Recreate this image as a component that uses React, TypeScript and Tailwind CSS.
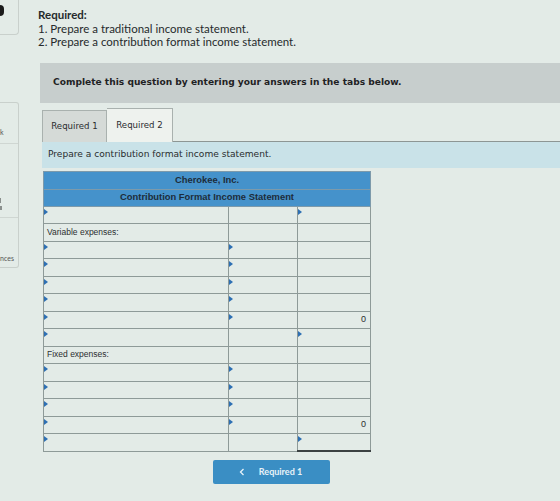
import React from 'react';

type Row = {
  label?: string;
  marks?: [boolean, boolean, boolean];
  value?: string;
  subtotal?: boolean;
  last?: boolean;
};

const rows: Row[] = [
  { marks: [true, false, true] },
  { label: 'Variable expenses:' },
  { marks: [true, true, false] },
  { marks: [true, true, false] },
  { marks: [true, true, false] },
  { marks: [true, true, false] },
  { marks: [true, true, false], value: '0' },
  { marks: [true, false, true], subtotal: true },
  { label: 'Fixed expenses:' },
  { marks: [true, true, false] },
  { marks: [true, true, false] },
  { marks: [true, true, false] },
  { marks: [true, true, false], value: '0' },
  { marks: [true, false, true], subtotal: true, last: true },
];

const Mark = () => (
  <span className="absolute left-0 top-[2px] h-0 w-0 border-y-[3px] border-l-[4px] border-y-transparent border-l-[#2d6fb3]" />
);

const App: React.FC = () => {
  return (
    <div className="flex h-[501px] w-[560px] overflow-hidden bg-[#e3ebe7] text-[#2a2d2e]">
      {/* sidebar of the page behind */}
      <div className="flex w-[19px] shrink-0 flex-col">
        <div className="flex h-[35px] items-start rounded-br-[4px] border-r border-b border-[#c9d0cc] pt-[5px]">
          <span className="h-[11px] w-[4px] rounded-r-full bg-[#1b1b1b]" />
        </div>
        <div className="mt-[67px] flex h-[166px] flex-col rounded-r-[3px] border-y border-r border-[#c9d0cc] font-['Lato',sans-serif] text-[7px] text-[#555]">
          <div className="flex h-[41px] items-end border-b border-[#cfd6d2] pb-[6px]">
            <span>k</span>
          </div>
          <div className="flex h-[74px] flex-col justify-end gap-[3px] border-b border-[#cfd6d2] pb-[7px]">
            <span className="h-[5px] w-[1px] bg-[#8a8f8d]" />
            <span className="h-[4px] w-[2px] bg-[#8a8f8d]" />
          </div>
          <div className="flex flex-1 items-end pb-[4px]">
            <span className="whitespace-nowrap">nces</span>
          </div>
        </div>
      </div>

      <div className="flex min-w-0 flex-1 flex-col pt-[8px] pl-[19px]">
        <div className="font-['Lato',sans-serif] text-[11.5px] leading-[13.5px] text-[#262a2c]">
          <p className="font-bold">Required:</p>
          <p>1. Prepare a traditional income statement.</p>
          <p>2. Prepare a contribution format income statement.</p>
        </div>

        <div className="mt-[14px] ml-[2px] flex h-[40px] items-center bg-[#c7cecd] pl-[13px] font-['DejaVu_Sans',sans-serif] text-[9.1px] font-bold text-[#1f2224]">
          Complete this question by entering your answers in the tabs below.
        </div>

        <div className="mt-[5px] ml-[4px] flex items-end font-['DejaVu_Sans',sans-serif] text-[8.6px] text-[#2a2d2e]">
          <div className="flex h-[32px] w-[65px] items-center justify-center border border-b-0 border-[#a9b1ae] bg-[#d5dad7]">
            Required 1
          </div>
          <div className="flex h-[34px] w-[66px] items-center justify-center border border-b-0 border-l-0 border-[#a9b1ae] bg-[#eef2ee]">
            Required 2
          </div>
          <div className="h-[1px] flex-1 bg-[#8d9694]" />
        </div>

        <div className="ml-[4px] flex h-[26px] items-center bg-[#c9e2e8] pl-[6px] font-['DejaVu_Sans',sans-serif] text-[9.1px] text-[#2a2d2e]">
          Prepare a contribution format income statement.
        </div>

        <table className="mt-[3px] ml-[5px] w-[327px] table-fixed border-collapse font-['Liberation_Sans',sans-serif] text-[8.5px]">
          <colgroup>
            <col className="w-[185px]" />
            <col className="w-[69px]" />
            <col className="w-[73px]" />
          </colgroup>
          <thead>
            <tr className="h-[18px] bg-[#4592cb]">
              <th colSpan={3} className="border border-[#7d9aab] text-center text-[9.4px] font-bold text-[#1d2c3a]">
                Cherokee, Inc.
              </th>
            </tr>
            <tr className="h-[17px] bg-[#4592cb]">
              <th colSpan={3} className="border border-[#7d9aab] text-center text-[9.4px] font-bold text-[#1d2c3a]">
                Contribution Format Income Statement
              </th>
            </tr>
          </thead>
          <tbody>
            {rows.map((row, i) => (
              <tr key={i} className="h-[17.5px]">
                <td className="relative border border-[#8e9a98] px-[3px] text-[#2c2f30]">
                  {row.marks?.[0] && <Mark />}
                  {row.label}
                </td>
                <td className="relative border border-[#8e9a98]">
                  {row.marks?.[1] && <Mark />}
                </td>
                <td
                  className={`relative border border-[#8e9a98] px-[4px] text-right text-[9px] ${row.subtotal ? 'border-t-[#5a6262]' : ''} ${row.last ? 'border-b-[2px] border-b-[#3b4142]' : ''}`}
                >
                  {row.marks?.[2] && <Mark />}
                  {row.value}
                </td>
              </tr>
            ))}
          </tbody>
        </table>

        <div className="mt-[8px] ml-[175px] flex h-[24px] w-[117px] items-center justify-center gap-[14px] rounded-[2px] bg-[#3a8ec4] pr-[2px] font-['Lato',sans-serif] text-[9px] font-bold text-[#e8f2f8]">
          <svg width="6" height="8" viewBox="0 0 6 8" fill="none">
            <path d="M4.5 1 L1.5 4 L4.5 7" stroke="currentColor" strokeWidth="1.3" />
          </svg>
          <span>Required 1</span>
        </div>
      </div>
    </div>
  );
};

export default App;
